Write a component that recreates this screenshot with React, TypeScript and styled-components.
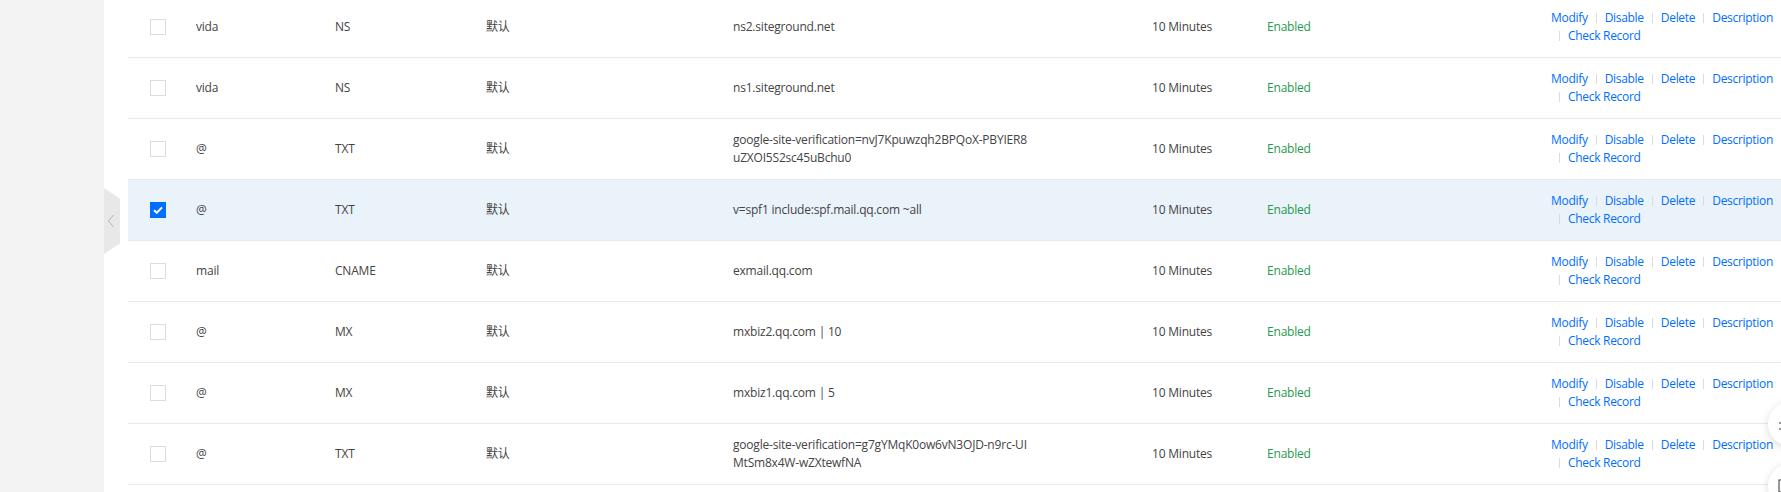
import React from "react";
import styled, { createGlobalStyle } from "styled-components";

const Global = createGlobalStyle`
  html, body { margin: 0; padding: 0; height: 100%; overflow: hidden; background: #fff; }
  #root { height: 100%; }
  body { font-family: "Open Sans", "Noto Sans CJK SC", sans-serif; font-size: 12px; color: #444; letter-spacing: -0.2px; }
`;

const Page = styled.div`
  display: flex;
  height: 100%;
`;

const Sidebar = styled.aside`
  position: relative;
  width: 104px;
  flex: none;
  background: #f3f3f3;
`;

const CollapseTab = styled.button`
  position: absolute;
  left: 104px;
  top: 188px;
  width: 16px;
  height: 66px;
  padding: 0;
  border: none;
  background: #e8e8e8;
  clip-path: polygon(0 0, 100% 16%, 100% 84%, 0 100%);
  display: flex;
  align-items: center;
  justify-content: flex-start;
  padding-left: 3px;
  cursor: pointer;
`;

const Main = styled.main`
  flex: 1;
  padding-left: 24px;
  min-width: 0;
`;

const Table = styled.div`
  margin-top: -3px;
`;

const Row = styled.div<{ $selected?: boolean }>`
  display: grid;
  grid-template-columns: 68px 139px 151px 247px 419px 115px 284px 1fr;
  align-items: center;
  height: 60px;
  border-bottom: 1px solid #e6e9ed;
  background: ${(p) => (p.$selected ? "#eaf2fa" : "#fff")};
`;

const Cell = styled.div`
  line-height: 18px;
  white-space: nowrap;
`;

const CheckCell = styled.div`
  padding-left: 22px;
  display: flex;
  align-items: center;
`;

const Box = styled.span<{ $checked?: boolean }>`
  width: 16px;
  height: 16px;
  box-sizing: border-box;
  border: 1px solid ${(p) => (p.$checked ? "#006eff" : "#dcdcdc")};
  background: ${(p) => (p.$checked ? "#006eff" : "#fff")};
  display: flex;
  align-items: center;
  justify-content: center;
`;

const Status = styled.span`
  color: #1f9a4e;
`;

const Actions = styled.div`
  width: 228px;
  line-height: 18px;
  white-space: normal;
  letter-spacing: -0.3px;
`;

const Link = styled.a`
  color: #006eff;
  text-decoration: none;
  cursor: pointer;
  white-space: nowrap;
`;

const Sep = styled.span`
  display: inline-block;
  width: 1px;
  height: 10px;
  background: #dcdcdc;
  margin: 0 8px 0 8px;
  vertical-align: -1px;
`;

const Floating = styled.div`
  position: fixed;
  left: 1768px;
  width: 44px;
  height: 44px;
  border-radius: 50%;
  background: #fff;
  box-shadow: 0 2px 8px rgba(0, 0, 0, 0.15);
  display: flex;
  align-items: center;
  padding-left: 10px;
  box-sizing: border-box;
`;

type Rec = {
  host: string;
  type: string;
  line: string;
  value: string[];
  ttl: string;
  selected?: boolean;
};

const records: Rec[] = [
  { host: "vida", type: "NS", line: "默认", value: ["ns2.siteground.net"], ttl: "10 Minutes" },
  { host: "vida", type: "NS", line: "默认", value: ["ns1.siteground.net"], ttl: "10 Minutes" },
  {
    host: "@",
    type: "TXT",
    line: "默认",
    value: ["google-site-verification=nvJ7Kpuwzqh2BPQoX-PBYIER8", "uZXOI5S2sc45uBchu0"],
    ttl: "10 Minutes",
  },
  { host: "@", type: "TXT", line: "默认", value: ["v=spf1 include:spf.mail.qq.com ~all"], ttl: "10 Minutes", selected: true },
  { host: "mail", type: "CNAME", line: "默认", value: ["exmail.qq.com"], ttl: "10 Minutes" },
  { host: "@", type: "MX", line: "默认", value: ["mxbiz2.qq.com | 10"], ttl: "10 Minutes" },
  { host: "@", type: "MX", line: "默认", value: ["mxbiz1.qq.com | 5"], ttl: "10 Minutes" },
  {
    host: "@",
    type: "TXT",
    line: "默认",
    value: ["google-site-verification=g7gYMqK0ow6vN3OJD-n9rc-UI", "MtSm8x4W-wZXtewfNA"],
    ttl: "10 Minutes",
  },
];

const Check = () => (
  <svg width="10" height="8" viewBox="0 0 10 8">
    <path d="M1 4.2 L3.8 6.8 L9 1.4" fill="none" stroke="#fff" strokeWidth="2" />
  </svg>
);

export default function App() {
  return (
    <>
      <Global />
      <Page>
        <Sidebar>
          <CollapseTab aria-label="collapse">
            <svg width="8" height="14" viewBox="0 0 8 14">
              <path d="M6.5 1 L1.5 7 L6.5 13" fill="none" stroke="#b5b5b5" strokeWidth="1" />
            </svg>
          </CollapseTab>
        </Sidebar>
        <Main>
          <Table>
            {records.map((r, i) => (
              <Row key={i} $selected={r.selected}>
                <CheckCell>
                  <Box $checked={r.selected}>{r.selected && <Check />}</Box>
                </CheckCell>
                <Cell>{r.host}</Cell>
                <Cell>{r.type}</Cell>
                <Cell>{r.line}</Cell>
                <Cell>
                  {r.value.map((v, j) => (
                    <div key={j}>{v}</div>
                  ))}
                </Cell>
                <Cell>{r.ttl}</Cell>
                <Cell>
                  <Status>Enabled</Status>
                </Cell>
                <Actions>
                  <Link>Modify</Link>
                  <Sep />
                  <Link>Disable</Link>
                  <Sep />
                  <Link>Delete</Link>
                  <Sep />
                  <Link>Description</Link> <Sep />
                  <Link>Check Record</Link>
                </Actions>
              </Row>
            ))}
          </Table>
        </Main>
      </Page>
      <Floating style={{ top: 402 }}>
        <svg width="14" height="14" viewBox="0 0 14 14">
          <path d="M1 12 H13" stroke="#555" strokeWidth="1.2" />
          <path d="M1 6 H6" stroke="#555" strokeWidth="1.2" />
        </svg>
      </Floating>
      <Floating style={{ top: 464 }}>
        <svg width="14" height="14" viewBox="0 0 14 14">
          <rect x="1" y="1" width="12" height="12" fill="none" stroke="#555" strokeWidth="1.2" />
        </svg>
      </Floating>
    </>
  );
}
